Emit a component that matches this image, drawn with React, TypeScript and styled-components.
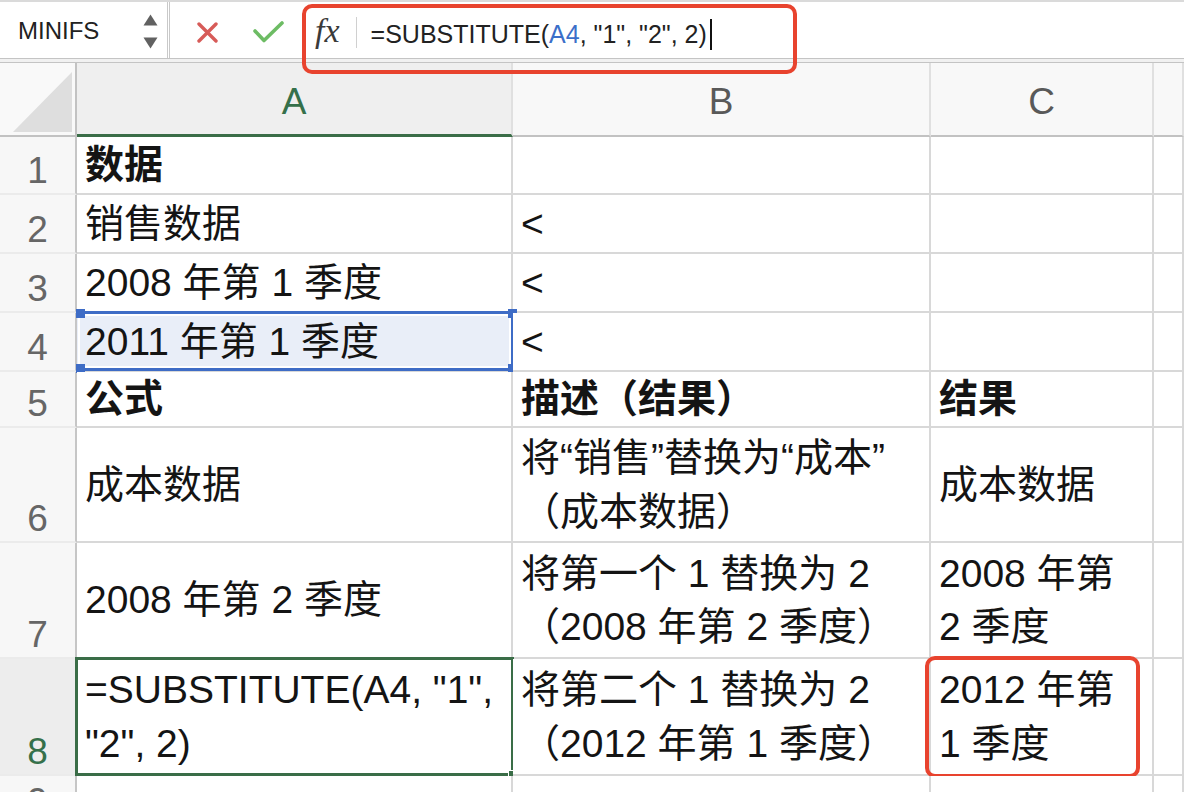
import React from 'react';
import styled, { createGlobalStyle, css } from 'styled-components';

type Corner = 'tl' | 'tr' | 'bl' | 'br';

type CellData = {
  text?: string;
  bold?: boolean;
  range?: boolean;
  active?: boolean;
  marked?: boolean;
};

type RowData = {
  n: number;
  cells: CellData[];
};

const columns = ['A', 'B', 'C', ''];

const rows: RowData[] = [
  { n: 1, cells: [{ text: '数据', bold: true }, {}, {}, {}] },
  { n: 2, cells: [{ text: '销售数据' }, { text: '<' }, {}, {}] },
  { n: 3, cells: [{ text: '2008 年第 1 季度' }, { text: '<' }, {}, {}] },
  { n: 4, cells: [{ text: '2011 年第 1 季度', range: true }, { text: '<' }, {}, {}] },
  {
    n: 5,
    cells: [
      { text: '公式', bold: true },
      { text: '描述（结果）', bold: true },
      { text: '结果', bold: true },
      {},
    ],
  },
  {
    n: 6,
    cells: [
      { text: '成本数据' },
      { text: '将“销售”替换为“成本”\n（成本数据）' },
      { text: '成本数据' },
      {},
    ],
  },
  {
    n: 7,
    cells: [
      { text: '2008 年第 2 季度' },
      { text: '将第一个 1 替换为 2\n（2008 年第 2 季度）' },
      { text: '2008 年第\n2 季度' },
      {},
    ],
  },
  {
    n: 8,
    cells: [
      { text: '=SUBSTITUTE(A4, "1",\n"2", 2)', active: true },
      { text: '将第二个 1 替换为 2\n（2012 年第 1 季度）' },
      { text: '2012 年第\n1 季度', marked: true },
      {},
    ],
  },
  { n: 9, cells: [{}, {}, {}, {}] },
];

const GREEN = '#3a6d47';
const BLUE = '#3e6cc6';
const RED = '#e8432e';

export default function App() {
  return (
    <>
      <GlobalStyle />
      <Toolbar>
        <NameBox>
          <NameText>MINIFS</NameText>
          <svg width="15" height="35" viewBox="0 0 15 35">
            <path d="M7.5 0.5 L14.5 11.5 L0.5 11.5 Z" fill="#616161" />
            <path d="M0.5 23.5 L14.5 23.5 L7.5 34.5 Z" fill="#616161" />
          </svg>
        </NameBox>
        <ActionGroup>
          <svg width="21" height="21" viewBox="0 0 21 21">
            <path
              d="M2 2 L19 19 M19 2 L2 19"
              stroke="#d75b58"
              strokeWidth="3.4"
              strokeLinecap="round"
            />
          </svg>
          <svg width="31" height="22" viewBox="0 0 31 22">
            <path
              d="M2 10 L11 19.5 L29 2"
              stroke="#6dbc64"
              strokeWidth="3.6"
              fill="none"
              strokeLinecap="round"
              strokeLinejoin="round"
            />
          </svg>
        </ActionGroup>
        <FormulaSection>
          <FxLabel>fx</FxLabel>
          <FxDivider />
          <FormulaText>
            =SUBSTITUTE(<Ref>A4</Ref>, "1", "2", 2)
          </FormulaText>
          <Caret />
        </FormulaSection>
        <FormulaHighlight />
      </Toolbar>
      <ToolbarGap />
      <Sheet>
        <CornerCell>
          <svg width="77" height="72" viewBox="0 0 77 72">
            <path d="M72 9 L72 69 L13 69 Z" fill="#dedede" />
          </svg>
        </CornerCell>
        {columns.map((c, i) => (
          <ColHead key={i} $active={c === 'A'}>
            {c}
          </ColHead>
        ))}
        {rows.map((row) => (
          <React.Fragment key={row.n}>
            <RowHead $active={row.n === 8}>{row.n}</RowHead>
            {row.cells.map((cell, i) => (
              <Cell key={i} $bold={cell.bold} $range={cell.range}>
                {cell.text}
                {cell.range && (
                  <RangeFrame>
                    <Handle $corner="tl" />
                    <Handle $corner="tr" />
                    <Handle $corner="bl" />
                    <Handle $corner="br" />
                  </RangeFrame>
                )}
                {cell.active && (
                  <ActiveFrame>
                    <FillHandle />
                  </ActiveFrame>
                )}
                {cell.marked && <MarkBox />}
              </Cell>
            ))}
          </React.Fragment>
        ))}
      </Sheet>
    </>
  );
}

const GlobalStyle = createGlobalStyle`
  html, body {
    margin: 0;
    padding: 0;
    background: #fff;
    overflow: hidden;
  }
  body {
    font-family: "Liberation Sans", "Noto Sans CJK SC", sans-serif;
  }
  * {
    box-sizing: border-box;
  }
`;

const Toolbar = styled.header`
  position: relative;
  display: flex;
  align-items: stretch;
  height: 59px;
  border-top: 2px solid #dadada;
  border-bottom: 1px solid #c4c4c4;
  background: #fff;
`;

const ToolbarGap = styled.div`
  height: 4px;
  background: #f1f1f1;
  border-bottom: 1px solid #c4c4c4;
`;

const NameBox = styled.div`
  display: flex;
  align-items: center;
  justify-content: space-between;
  width: 170px;
  padding: 2px 9px 0 18px;
  border-right: 3px double #c9c9c9;
`;

const NameText = styled.span`
  font-size: 24px;
  color: #222;
`;

const ActionGroup = styled.div`
  display: flex;
  align-items: center;
  gap: 35px;
  width: 132px;
  padding: 4px 0 0 27px;
`;

const FormulaSection = styled.div`
  display: flex;
  align-items: center;
  flex: 1;
  padding: 8px 0 0 13px;
`;

const FxLabel = styled.span`
  font-family: "Liberation Serif", "DejaVu Serif", serif;
  font-style: italic;
  font-size: 34px;
  color: #3a3a3a;
  margin-bottom: 6px;
`;

const FxDivider = styled.div`
  width: 1px;
  height: 31px;
  margin: 0 14px 4px 16px;
  background: #d0d0d0;
`;

const FormulaText = styled.span`
  font-size: 25px;
  color: #222;
  white-space: pre;
`;

const Ref = styled.span`
  color: #3b6fc9;
`;

const Caret = styled.span`
  width: 2px;
  height: 31px;
  margin-left: 3px;
  background: #111;
`;

const FormulaHighlight = styled.div`
  position: absolute;
  left: 302px;
  top: 2px;
  width: 495px;
  height: 70px;
  border: 4px solid ${RED};
  border-radius: 10px;
  z-index: 5;
  pointer-events: none;
`;

const Sheet = styled.div`
  display: grid;
  grid-template-columns: 77px 436px 418px 223px 1fr;
  grid-template-rows: 74px 58px 59px 59px 59px 56px 115px 116px 117px 50px;
`;

const CornerCell = styled.div`
  background: #f9f9f9;
  border-right: 2px solid #c2c2c2;
  border-bottom: 2px solid #c2c2c2;
  overflow: hidden;
`;

const ColHead = styled.div<{ $active?: boolean }>`
  display: flex;
  align-items: center;
  justify-content: center;
  padding-top: 6px;
  font-size: 37px;
  color: ${(p) => (p.$active ? '#35704a' : '#595959')};
  background: ${(p) => (p.$active ? '#efefef' : '#f8f8f8')};
  border-right: 2px solid #e0e0e0;
  border-bottom: ${(p) => (p.$active ? `3px solid ${GREEN}` : '2px solid #c2c2c2')};
`;

const RowHead = styled.div<{ $active?: boolean }>`
  display: flex;
  align-items: flex-end;
  justify-content: center;
  padding-bottom: 4px;
  font-size: 37px;
  line-height: 1;
  color: ${(p) => (p.$active ? '#35704a' : '#666')};
  background: ${(p) => (p.$active ? '#ededed' : '#f7f7f7')};
  border-right: 2px solid #c6c6c6;
  border-bottom: 2px solid #ebebeb;
`;

const Cell = styled.div<{ $bold?: boolean; $range?: boolean }>`
  position: relative;
  display: flex;
  align-items: center;
  padding: 0 8px;
  font-size: 39px;
  line-height: 1.37;
  font-weight: ${(p) => (p.$bold ? 700 : 400)};
  color: #141414;
  white-space: pre;
  background: ${(p) => (p.$range ? '#e9eef8' : '#fff')};
  border-right: 2px solid #d8d8d8;
  border-bottom: 2px solid #d8d8d8;
`;

const RangeFrame = styled.div`
  position: absolute;
  top: -2px;
  left: 1px;
  right: -3px;
  bottom: -1px;
  border: 3px solid ${BLUE};
  border-left: none;
  box-shadow: inset 0 0 0 2px #fff;
  pointer-events: none;
`;

const cornerPlace = {
  tl: css`
    top: -5px;
    left: -2px;
  `,
  tr: css`
    top: -5px;
    right: -6px;
  `,
  bl: css`
    bottom: -5px;
    left: -2px;
  `,
  br: css`
    bottom: -5px;
    right: -6px;
  `,
};

const Handle = styled.span<{ $corner: Corner }>`
  position: absolute;
  width: 9px;
  height: 9px;
  background: ${BLUE};
  ${(p) => cornerPlace[p.$corner]}
`;

const ActiveFrame = styled.div`
  position: absolute;
  top: -2px;
  left: -2px;
  right: -3px;
  bottom: -2px;
  border: 3px solid ${GREEN};
  pointer-events: none;
`;

const FillHandle = styled.span`
  position: absolute;
  right: -6px;
  bottom: -6px;
  width: 9px;
  height: 9px;
  background: ${GREEN};
  border: 1px solid #fff;
`;

const MarkBox = styled.div`
  position: absolute;
  top: -3px;
  left: -6px;
  right: 12px;
  bottom: -4px;
  border: 4px solid ${RED};
  border-radius: 10px;
  pointer-events: none;
`;
